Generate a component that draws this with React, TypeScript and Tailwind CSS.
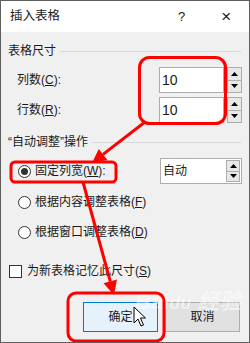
import React from "react";

const font = { fontFamily: '"Liberation Sans", "Noto Sans CJK SC", sans-serif' };

const Arrows = () => (
    <div className="flex flex-col w-full h-full">
        <div className="flex-1 flex items-center justify-center border-b border-[#adadad] bg-[#e8e8e8]">
            <svg width="7" height="4" viewBox="0 0 7 4"><polygon points="3.5,0 7,4 0,4" fill="#000" /></svg>
        </div>
        <div className="flex-1 flex items-center justify-center bg-[#e8e8e8]">
            <svg width="7" height="4" viewBox="0 0 7 4"><polygon points="0,0 7,0 3.5,4" fill="#000" /></svg>
        </div>
    </div>
);

const SectionTitle = ({ text, className }: { text: string; className?: string }) => (
    <div className={"flex items-center h-[18px] pr-[8px] " + (className ?? "")}>
        <span className="shrink-0">{text}</span>
        <div className="flex-1 h-px bg-[#d9d9d9] ml-[4px]" />
    </div>
);

const NumberRow = ({ label, hot, className }: { label: string; hot: string; className?: string }) => (
    <div className={"flex items-center justify-between h-[26px] pr-[7px] " + (className ?? "")}>
        <span className="ml-[9px]">
            {label}(<span className="underline">{hot}</span>):
        </span>
        <div className="flex items-center">
            <div className="w-[65px] h-[26px] border border-[#adadad] bg-white flex items-center pl-[2px] text-[14px]">10</div>
            <div className="ml-[3px] w-[15px] h-[26px] border border-[#adadad]"><Arrows /></div>
        </div>
    </div>
);

const Radio = ({ checked }: { checked?: boolean }) => (
    <div className="w-[13px] h-[13px] shrink-0 rounded-full border border-[#333] bg-white flex items-center justify-center">
        {checked && <div className="w-[7px] h-[7px] rounded-full bg-[#333]" />}
    </div>
);

export default function App() {
    return (
        <div className="relative w-[250px] h-[343px] border border-[#5f5f5f] bg-[#f0f0f0] text-[12px] text-[#1a1a1a] overflow-hidden" style={font}>
            <div className="h-[31px] bg-white flex items-center pl-[9px]">
                <span className="text-[12.5px]">插入表格</span>
                <span className="ml-[118px] text-[13px]">?</span>
                <span className="ml-[36px] text-[17px] font-light">×</span>
            </div>

            <div className="pl-[7px]">
                <SectionTitle text="表格尺寸" className="mt-[10px]" />
                <NumberRow label="列数" hot="C" className="mt-[7px]" />
                <NumberRow label="行数" hot="R" className="mt-[4px]" />

                <SectionTitle text="“自动调整”操作" className="mt-[10px]" />

                <div className="flex items-center justify-between h-[26px] mt-[7px] pr-[7px]">
                    <div className="flex items-center">
                        <div className="ml-[10px]"><Radio checked /></div>
                        <span className="ml-[4px]">
                            固定列宽(<span className="underline">W</span>):
                        </span>
                    </div>
                    <div className="w-[82px] h-[26px] border border-[#adadad] bg-white flex items-center justify-between pl-[2px] pr-px">
                        <span>自动</span>
                        <div className="w-[14px] h-[22px] border border-[#adadad]"><Arrows /></div>
                    </div>
                </div>

                <div className="flex items-center h-[18px] mt-[9px]">
                    <div className="ml-[10px]"><Radio /></div>
                    <span className="ml-[4px]">根据内容调整表格(<span className="underline">F</span>)</span>
                </div>
                <div className="flex items-center h-[18px] mt-[12px]">
                    <div className="ml-[10px]"><Radio /></div>
                    <span className="ml-[4px]">根据窗口调整表格(<span className="underline">D</span>)</span>
                </div>

                <div className="flex items-center h-[18px] mt-[21px]">
                    <div className="w-[13px] h-[13px] shrink-0 border border-[#333] bg-white ml-px" />
                    <span className="ml-[5px]">为新表格记忆此尺寸(<span className="underline">S</span>)</span>
                </div>

                <div className="flex h-[30px] mt-[22px] ml-[75px] gap-[7px]">
                    <div className="w-[75px] border border-[#0078d7] bg-[#e5f1fb] flex items-center justify-center">确定</div>
                    <div className="w-[75px] border border-[#adadad] bg-[#e1e1e1] flex items-center justify-center">取消</div>
                </div>
            </div>

            <div className="absolute left-[134px] top-[284px] text-[22px] font-bold text-white/50 italic pointer-events-none">Bai<span className="text-[18px]">du</span> 经验</div>

            <svg className="absolute left-[-1px] top-[-1px] pointer-events-none" width="250" height="343" viewBox="0 0 250 343">
                <rect x="139.5" y="57.5" width="86" height="66" rx="10" fill="none" stroke="#ff0000" strokeWidth="3" />
                <rect x="11" y="162" width="105" height="20" rx="4" fill="none" stroke="#ff0000" strokeWidth="3" />
                <rect x="68" y="293" width="96" height="48" rx="8" fill="none" stroke="#ff0000" strokeWidth="3" />
                <line x1="145" y1="122" x2="103" y2="154.4" stroke="#ff0000" strokeWidth="3" />
                <polygon points="92,163 107.4,159.9 98.8,148.9" fill="#ff0000" />
                <line x1="83" y1="182" x2="110.3" y2="281.5" stroke="#ff0000" strokeWidth="3" />
                <polygon points="114,295 117,279.6 103.5,283.3" fill="#ff0000" />
                <path d="M134 307 L134 323 L138 319 L141 326 L143.5 325 L140.5 318 L145.5 318 Z" fill="#fff" stroke="#000" strokeWidth="1" strokeLinejoin="round" />
            </svg>
        </div>
    );
}
